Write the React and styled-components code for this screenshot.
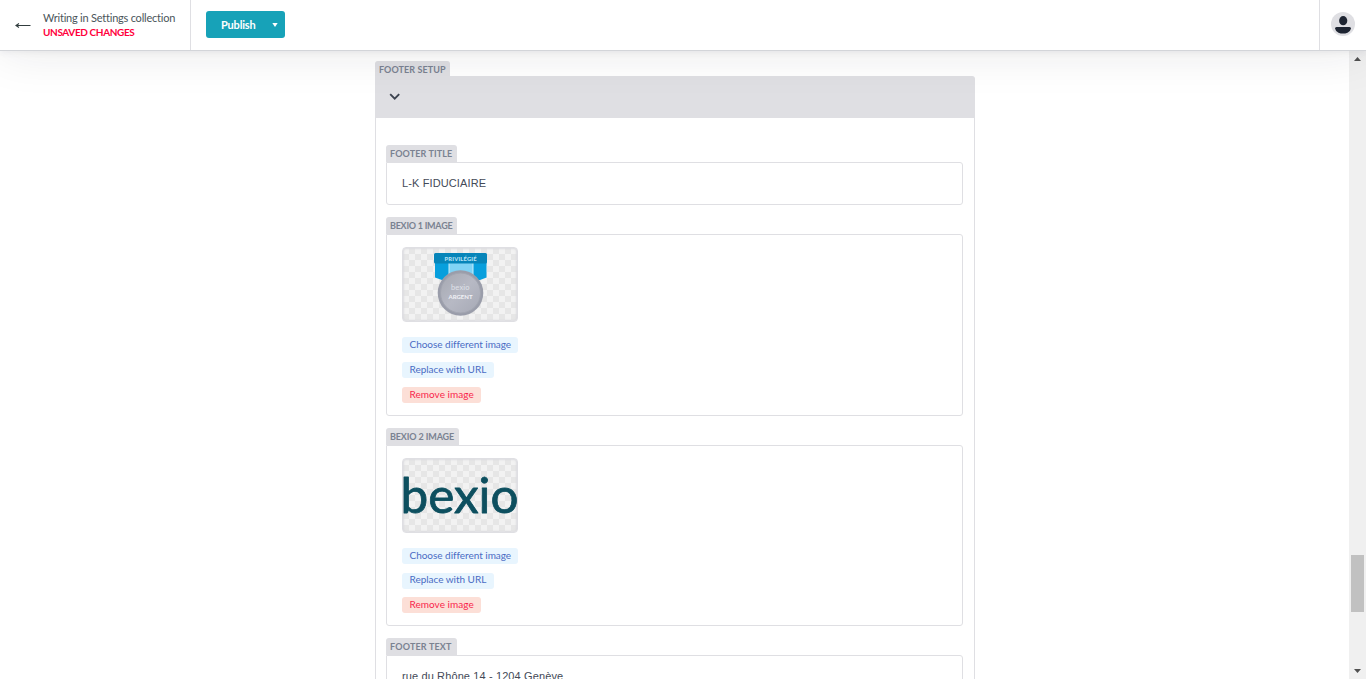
import React from 'react';
import styled, { createGlobalStyle } from 'styled-components';

const Global = createGlobalStyle`
  * { box-sizing: border-box; }
  html, body { margin: 0; height: 100%; overflow: hidden; background: #fff; }
  body { font-family: Lato, "Open Sans", sans-serif; color: #313d3e; }
  button { font-family: inherit; border: 0; margin: 0; cursor: pointer; }
`;

const Page = styled.div`
  height: 100vh;
  display: flex;
  flex-direction: column;
  overflow: hidden;
`;

const Toolbar = styled.header`
  position: relative;
  z-index: 2;
  flex: 0 0 51px;
  display: flex;
  background: #fff;
  border-bottom: 1px solid #d3d5d9;
  box-shadow: 0 2px 6px rgba(68, 74, 87, 0.07), 0 1px 48px rgba(30, 30, 35, 0.1);
`;

const BackLink = styled.div`
  width: 191px;
  display: flex;
  align-items: center;
  padding-left: 15px;
  border-right: 1px solid #dfdfe3;
`;

const Status = styled.div`
  margin-left: 12px;
  padding-bottom: 1px;
  line-height: 14px;
  white-space: nowrap;
`;

const Collection = styled.div`
  font-size: 11px;
  letter-spacing: -0.22px;
  color: #4a555a;
`;

const Unsaved = styled.div`
  font-size: 10px;
  font-weight: 700;
  letter-spacing: -0.37px;
  color: #ff003b;
`;

const Actions = styled.div`
  flex: 1;
  padding: 11px 0 0 15px;
`;

const PublishButton = styled.button`
  display: flex;
  align-items: center;
  justify-content: space-between;
  width: 79px;
  height: 27px;
  padding: 0 7px 0 15px;
  border-radius: 3px;
  background: #17a2b8;
  color: #fff;
  font-size: 11px;
  font-weight: 700;
  letter-spacing: -0.2px;
`;

const Account = styled.div`
  width: 47px;
  padding: 12px 0 0 11px;
  border-left: 1px solid #dfdfe3;
`;

const Body = styled.div`
  flex: 1;
  min-height: 0;
  display: flex;
`;

const Content = styled.main`
  flex: 1;
  padding: 10px 0 0 375px;
  overflow: hidden;
`;

const Group = styled.section`
  width: 600px;
`;

const Label = styled.div`
  width: ${(p) => p.$width}px;
  height: ${(p) => p.$height || 17}px;
  padding-left: 4px;
  border-radius: 3px 3px 0 0;
  background: #dfdfe3;
  color: #7a8291;
  font-size: 9px;
  font-weight: 700;
  line-height: 18px;
  letter-spacing: ${(p) => p.$tracking || 0}px;
  white-space: nowrap;
`;

const GroupBar = styled.div`
  height: 42px;
  padding: 17px 0 0 14px;
  border-radius: 0 3px 0 0;
  background: #dfdfe3;
  svg { display: block; }
`;

const GroupBody = styled.div`
  height: 700px;
  padding: 27px 11px 0 10px;
  border: 1px solid #dfdfe3;
  border-top: 0;
`;

const Field = styled.div`
  margin-bottom: 12px;
`;

const Box = styled.div`
  height: ${(p) => p.$height}px;
  padding: 12px 15px;
  border: 1px solid #dfdfe3;
  border-radius: 0 3px 3px 3px;
`;

const Value = styled.div`
  padding-top: 1px;
  color: #444a57;
  font-family: "Liberation Sans", Arial, sans-serif;
  font-size: 11px;
  line-height: 15px;
  letter-spacing: ${(p) => p.$tracking}px;
`;

const Thumb = styled.div`
  width: 116px;
  height: 75px;
  border: 1px solid #dfdfe3;
  border-radius: 4px;
  overflow: hidden;
  background: repeating-conic-gradient(#e6e6e6 0 25%, #f2f2f2 0 50%) 0 0 / 12px 12px;
  box-shadow: inset 0 0 2px 1px #dcdce0;
  svg { display: block; }
`;

const Buttons = styled.div`
  display: flex;
  flex-direction: column;
  align-items: flex-start;
  gap: ${(p) => p.$gap || 9}px;
  margin-top: 15px;
`;

const SmallButton = styled.button`
  width: ${(p) => p.$width}px;
  height: 16px;
  padding: 0 0 2px 7.5px;
  border-radius: 3px;
  text-align: left;
  white-space: nowrap;
  background: ${(p) => (p.$danger ? '#fcdfd7' : '#e8f5fe')};
  color: ${(p) => (p.$danger ? '#f91f4c' : '#4a6cc4')};
  font-size: 10px;
  line-height: 13px;
  letter-spacing: ${(p) => p.$tracking}px;
`;

const Scrollbar = styled.aside`
  width: 17px;
  display: flex;
  flex-direction: column;
  align-items: center;
  justify-content: space-between;
  padding: 6px 0;
  background: #f0f0f0;
`;

const ScrollTrack = styled.div`
  flex: 1;
  width: 13px;
  padding-top: 494px;
`;

const ScrollThumb = styled.div`
  height: 57px;
  background: #c1c1c1;
`;

function ImageButtons({ gap }) {
  return (
    <Buttons $gap={gap}>
      <SmallButton $width={116} $tracking={-0.03}>Choose different image</SmallButton>
      <SmallButton $width={92} $tracking={-0.03}>Replace with URL</SmallButton>
      <SmallButton $danger $width={79} $tracking={0.03}>Remove image</SmallButton>
    </Buttons>
  );
}

function Medal() {
  return (
    <svg width="114" height="73" viewBox="-1 -1 114 73">
      <defs>
        <linearGradient id="silver" x1="0" y1="0" x2="1" y2="1">
          <stop offset="0" stopColor="#a5a8b1" />
          <stop offset="0.5" stopColor="#b7b9c4" />
          <stop offset="1" stopColor="#a6a9b5" />
        </linearGradient>
      </defs>
      <path d="M31 13H45V31H38L31 28.500Z" fill="#079fdd" />
      <path d="M69 13H82.500V28.500L76 31H69Z" fill="#079fdd" />
      <path d="M45 13H69V31H45Z" fill="#80d3f5" />
      <path d="M45 13V31M69 13V31" stroke="#c9edfa" strokeWidth="1" />
      <rect x="30" y="4" width="53" height="10.5" rx="1.5" fill="#0785b9" />
      <text x="40.5" y="11.6" textLength="32" fontFamily="Lato, sans-serif" fontSize="5.8" fontWeight="900" fill="#b5e2f5">PRIVILÉGIÉ</text>
      <circle cx="56.5" cy="44" r="22.8" fill="#9a9daa" />
      <circle cx="56.5" cy="44" r="20" fill="url(#silver)" stroke="#a2a5b0" />
      <text x="47" y="41" textLength="18.5" fontFamily="Lato, sans-serif" fontSize="7.5" fill="#dfe1e8">bexio</text>
      <text x="44.5" y="49.8" textLength="24" fontFamily="Lato, sans-serif" fontSize="6" fontWeight="700" fill="#f1f2f6">ARGENT</text>
    </svg>
  );
}

function BexioLogo() {
  return (
    <svg width="114" height="73" viewBox="-1 -1 114 73">
      <text x="-3.500" y="53.300" textLength="118" lengthAdjust="spacingAndGlyphs" fontFamily="Lato, sans-serif" fontSize="48" fontWeight="400" fill="#0d4f5f" stroke="#0d4f5f" strokeWidth="0.8" strokeLinejoin="round">bexio</text>
    </svg>
  );
}

export default function App() {
  return (
    <Page>
      <Global />
      <Toolbar>
        <BackLink>
          <svg width="16" height="10" viewBox="0 0 16 10" fill="none" stroke="#313d3e" strokeWidth="1.1">
            <path d="M15.5 5.5H1M4 3.500L1 5.5L4 7.500" />
          </svg>
          <Status>
            <Collection>Writing in Settings collection</Collection>
            <Unsaved>UNSAVED CHANGES</Unsaved>
          </Status>
        </BackLink>
        <Actions>
          <PublishButton>
            Publish
            <svg width="6" height="4" viewBox="0 0 6 4"><path d="M0.3 0H5.7L3 4Z" fill="#fff" /></svg>
          </PublishButton>
        </Actions>
        <Account>
          <svg width="24" height="24" viewBox="0 0 24 24">
            <circle cx="12" cy="12" r="12" fill="#dfdfe3" />
            <ellipse cx="12.2" cy="8.7" rx="4.1" ry="4.6" fill="#1e2532" />
            <path d="M4 16.5Q4 15 5.5 15H18.5Q20 15 20 16.5Q19.5 19.2 16.5 20.7Q12 22.5 7.5 20.7Q4.500 19.200 4 16.500Z" fill="#1e2532" />
          </svg>
        </Account>
      </Toolbar>
      <Body>
        <Content>
          <Group>
            <Label $width={75} $height={15} $tracking={0.08}>FOOTER SETUP</Label>
            <GroupBar>
              <svg width="12" height="8" viewBox="0 0 12 8" fill="none" stroke="#3c434f" strokeWidth="1.9">
                <path d="M1.200 1.200L5.700 5.700L10.200 1.200" />
              </svg>
            </GroupBar>
            <GroupBody>
              <Field>
                <Label $width={71} $tracking={0.12}>FOOTER TITLE</Label>
                <Box $height={43}><Value $tracking={0.12}>L-K FIDUCIAIRE</Value></Box>
              </Field>
              <Field>
                <Label $width={71} $tracking={-0.25}>BEXIO 1 IMAGE</Label>
                <Box $height={182}>
                  <Thumb><Medal /></Thumb>
                  <ImageButtons />
                </Box>
              </Field>
              <Field>
                <Label $width={73} $tracking={-0.12}>BEXIO 2 IMAGE</Label>
                <Box $height={181}>
                  <Thumb><BexioLogo /></Thumb>
                  <ImageButtons gap={8.6} />
                </Box>
              </Field>
              <Field>
                <Label $width={71} $tracking={0.18}>FOOTER TEXT</Label>
                <Box $height={100}><Value $tracking={0.12}>rue du Rhône 14 - 1204 Genève</Value></Box>
              </Field>
            </GroupBody>
          </Group>
        </Content>
        <Scrollbar>
          <svg width="7" height="4" viewBox="0 0 7 4"><path d="M0 4L3.500 0L7 4Z" fill="#505050" /></svg>
          <ScrollTrack><ScrollThumb /></ScrollTrack>
          <svg width="7" height="4" viewBox="0 0 7 4"><path d="M0 0L3.500 4L7 0Z" fill="#505050" /></svg>
        </Scrollbar>
      </Body>
    </Page>
  );
}
